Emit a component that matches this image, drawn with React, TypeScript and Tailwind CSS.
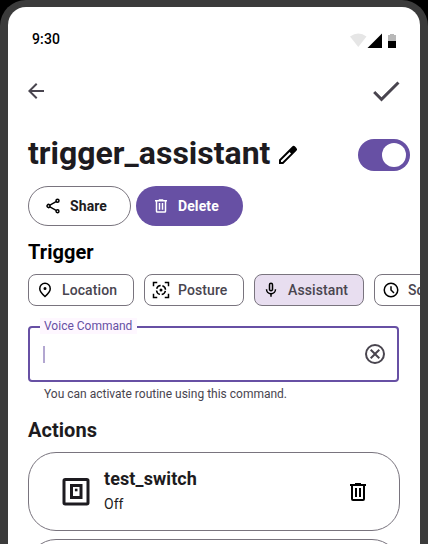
import React from "react";

type IconProps = { d: string; className?: string; viewBox?: string };

const Icon = ({ d, className = "", viewBox = "0 0 24 24" }: IconProps) => (
  <svg viewBox={viewBox} fill="currentColor" fillRule="evenodd" className={`block shrink-0 ${className}`}>
    <path d={d} />
  </svg>
);

const paths = {
  back: "M20 11H7.83l5.59-5.59L12 4l-8 8 8 8 1.41-1.41L7.83 13H20v-2z",
  check: "M9 16.17L4.83 12l-1.42 1.41L9 19 21 7l-1.41-1.41z",
  edit: "M5 19h1.400l8.620-8.620-1.400-1.400L5 17.600V19zM3 21v-4.250L16.200 3.580a2 2 0 0 1 2.830 0l1.390 1.400a2 2 0 0 1 0 2.820L7.250 21H3z",
  share:
    "M18 16c-.8 0-1.5.3-2 .8l-7.1-4.1c.1-.3.1-.5.1-.7s0-.5-.1-.7L16 7.200c.5.5 1.200.8 2 .8a3 3 0 1 0-3-3c0 .24.04.47.09.7L8.040 9.810A3 3 0 1 0 8.040 14.190l7.120 4.160c-.1.2-.1.400-.1.650a2.920 2.920 0 1 0 2.940-3zM18 4a1 1 0 1 1 0 2 1 1 0 0 1 0-2zM6 13a1 1 0 1 1 0-2 1 1 0 0 1 0 2zm12 7a1 1 0 1 1 0-2 1 1 0 0 1 0 2z",
  trash:
    "M7 21a2 2 0 0 1-2-2V6H4V4h5V3h6v1h5v2h-1v13a2 2 0 0 1-2 2H7zM7 19h10V6H7v13zM9 17h2V8H9v9zM13 17h2V8h-2v9z",
  pin: "M12 12a2 2 0 1 0 0-4 2 2 0 0 0 0 4zM12 19.350q3.050-2.800 4.530-5.090T18 10.200q0-2.730-1.740-4.460T12 4 7.740 5.740 6 10.200q0 1.770 1.470 4.060T12 19.350zM12 22q-4.030-3.430-6.010-6.360T4 10.200q0-3.750 2.410-5.980T12 2t5.590 2.220T20 10.200q0 2.500-1.990 5.440T12 22z",
  mic: "M12 14c1.660 0 3-1.340 3-3V5a3 3 0 1 0-6 0v6c0 1.660 1.340 3 3 3zM11 5a1 1 0 1 1 2 0v6a1 1 0 1 1-2 0V5zM17 11a5 5 0 0 1-10 0H5c0 3.530 2.610 6.430 6 6.920V21h2v-3.080c3.390-.49 6-3.390 6-6.920h-2z",
  clock: "M12 2a10 10 0 1 0 0 20 10 10 0 0 0 0-20zM12 20a8 8 0 1 1 0-16 8 8 0 0 1 0 16zM11 7h2v4.600l3.700 3.700-1.400 1.400L11 12.400V7z",
  cancel: "M8.400 17l3.600-3.600 3.600 3.600 1.400-1.400-3.600-3.600L17 8.400 15.600 7 12 10.600 8.400 7 7 8.400l3.600 3.600L7 15.600 8.400 17zM12 2a10 10 0 1 0 0 20 10 10 0 0 0 0-20zM12 20a8 8 0 1 1 0-16 8 8 0 0 1 0 16z",
};

const PostureIcon = () => (
  <svg viewBox="0 0 24 24" fill="none" stroke="currentColor" strokeWidth="2" className="block size-[18px] shrink-0">
    <path d="M2 7V2h5M17 2h5v5M22 17v5h-5M7 22H2v-5" />
    <circle cx="12" cy="12" r="6" strokeDasharray="7 2.425" strokeDashoffset="-1.200" />
    <circle cx="12" cy="12" r="2" fill="currentColor" stroke="none" />
  </svg>
);

const SwitchIcon = () => (
  <svg viewBox="0 0 28 28" fill="none" stroke="#1d1b20" className="block size-7 shrink-0">
    <rect x="2" y="1.500" width="24" height="24.500" rx="1.200" strokeWidth="3" />
    <rect x="9.500" y="7.500" width="9.500" height="12" strokeWidth="3" />
    <path d="M12.900 10.700h2.600v2.600h-2.600z" fill="#1d1b20" stroke="none" />
  </svg>
);

type ChipProps = { label: string; icon: React.ReactNode; width: string; active?: boolean };

const Chip = ({ label, icon, width, active }: ChipProps) => (
  <div
    className={`flex h-8 shrink-0 items-center gap-[7px] rounded-lg border border-[#79747e] pl-[6px] text-sm font-medium tracking-[0.1px] text-[#49454f] ${width} ${active ? "bg-[#e8def0]" : ""}`}
  >
    <span className="flex w-5 justify-center text-black">{icon}</span>
    {label}
  </div>
);

const StatusBar = () => (
  <div className="flex h-[66px] items-center justify-between pr-6 pl-6">
    <span className="-mt-[2px] text-sm font-medium tracking-[0.14px] text-black">9:30</span>
    <svg viewBox="0 0 48 17" className="mt-[2px] h-[17px] w-[48px]">
      <path d="M2 3.500Q10.500-2.500 18.500 3.500L10.300 14z" fill="#e6e6e6" />
      <path d="M34 .5V15H19.500z" fill="#000" />
      <path d="M40 2h2V1h4v1h2v6h-8z" fill="#b8b8b8" />
      <path d="M40 8h8v7h-8z" fill="#000" />
    </svg>
  </div>
);

export default function App() {
  return (
    <div className="h-[544px] w-[428px] overflow-hidden bg-black font-['Roboto','Noto_Sans',sans-serif]">
      <div className="h-[640px] rounded-[26px] bg-[#3b3b3b] px-2 pt-[7px]">
        <div className="h-[633px] overflow-hidden rounded-[18px] bg-white">
          <StatusBar />
          <header className="flex h-9 items-center justify-between px-4 text-[#49454f]">
            <Icon d={paths.back} className="size-6" />
            <Icon d={paths.check} className="size-9" />
          </header>

          <main className="px-5">
            <div className="mt-[24px] flex h-10 items-center">
              <h1 className="text-[32px] leading-10 font-bold text-[#1d1b20]">trigger_assistant</h1>
              <Icon d={paths.edit} className="mt-[4px] ml-[6px] size-6 text-black" />
              <div className="mt-[4px] -mr-[10px] ml-auto flex h-8 w-[52px] items-center justify-end rounded-full bg-[#6750a4] p-1">
                <span className="size-6 rounded-full bg-white" />
              </div>
            </div>

            <div className="mt-[13px] flex gap-[5px] text-sm font-bold tracking-[0.1px]">
              <button className="flex h-10 w-[103px] items-center gap-2 rounded-full border border-[#79747e] pl-[15px] text-[#1d1b20]">
                <Icon d={paths.share} className="size-[18px] text-black" />
                Share
              </button>
              <button className="flex h-10 w-[107px] items-center gap-2 rounded-full bg-[#6750a4] pl-4 text-white">
                <Icon d={paths.trash} className="size-[18px]" />
                Delete
              </button>
            </div>

            <h2 className="mt-[14px] text-xl leading-6 font-bold tracking-[0.05px] text-black">Trigger</h2>
            <div className="mt-[10px] flex gap-[10px]">
              <Chip label="Location" width="w-[106px]" icon={<Icon d={paths.pin} className="size-[18px]" />} />
              <Chip label="Posture" width="w-[100px]" icon={<PostureIcon />} />
              <Chip label="Assistant" width="w-[110px]" active icon={<Icon d={paths.mic} className="size-[18px]" />} />
              <Chip label="Schedule" width="w-[110px]" icon={<Icon d={paths.clock} className="size-[18px]" />} />
            </div>

            <div className="relative mt-5 flex h-14 w-[371px] items-center justify-between rounded border-2 border-[#6750a4] pr-[10px] pl-[13px]">
              <label className="absolute -top-[10px] left-[10px] h-4 w-[97px] bg-[#fef7ff] px-1 text-xs leading-4 whitespace-nowrap text-[#6750a4]">
                Voice Command
              </label>
              <span className="h-[17px] w-[2px] bg-[#b3a7d1]" />
              <Icon d={paths.cancel} className="size-6 text-[#49454f]" />
            </div>
            <p className="mt-1 pl-4 text-xs leading-4 text-[#49454f]">You can activate routine using this command.</p>

            <h2 className="mt-4 text-xl leading-6 font-bold tracking-[0.05px] text-[#1d1b20]">Actions</h2>
            <div className="mt-[10px] flex h-[79px] w-[372px] items-center rounded-[28px] border border-[#79747e] pr-[29px] pl-[33px]">
              <SwitchIcon />
              <div className="-mt-[2px] ml-[14px] flex-1 text-[#1d1b20]">
                <div className="text-lg leading-6 font-bold tracking-[0.1px]">test_switch</div>
                <div className="mt-[3px] text-sm leading-5">Off</div>
              </div>
              <Icon d={paths.trash} className="size-6 text-black" />
            </div>
            <div className="mt-2 h-[79px] w-[372px] rounded-[28px] border border-[#79747e]" />
          </main>
        </div>
      </div>
    </div>
  );
}
